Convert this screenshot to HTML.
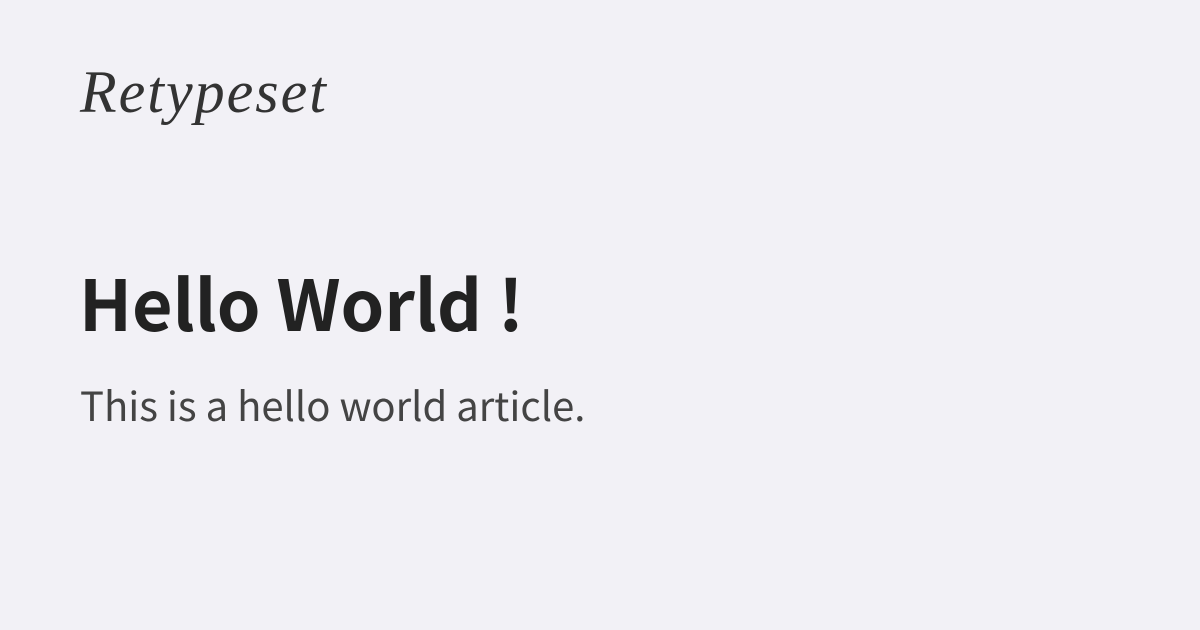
<!DOCTYPE html>
<html><head><meta charset="utf-8"><style>
html,body{margin:0;padding:0}
body{width:1200px;height:630px;background:#f2f1f6;position:relative;overflow:hidden}
.logo{position:absolute;left:80px;top:57px;font-family:"Liberation Serif",serif;font-style:italic;font-weight:400;font-size:60px;line-height:70px;color:#333;letter-spacing:2px}
h1{position:absolute;left:79px;top:260px;margin:0;font-family:"Noto Sans CJK SC","Liberation Sans",sans-serif;font-weight:700;font-size:70px;line-height:84px;color:#222}
p{position:absolute;left:80px;top:377px;margin:0;font-family:"Noto Sans CJK SC","Liberation Sans",sans-serif;font-size:40px;line-height:54px;color:#444}
</style></head><body>
<div class="logo">Retypeset</div>
<h1>Hello World !</h1>
<p>This is a hello world article.</p>
</body></html>
